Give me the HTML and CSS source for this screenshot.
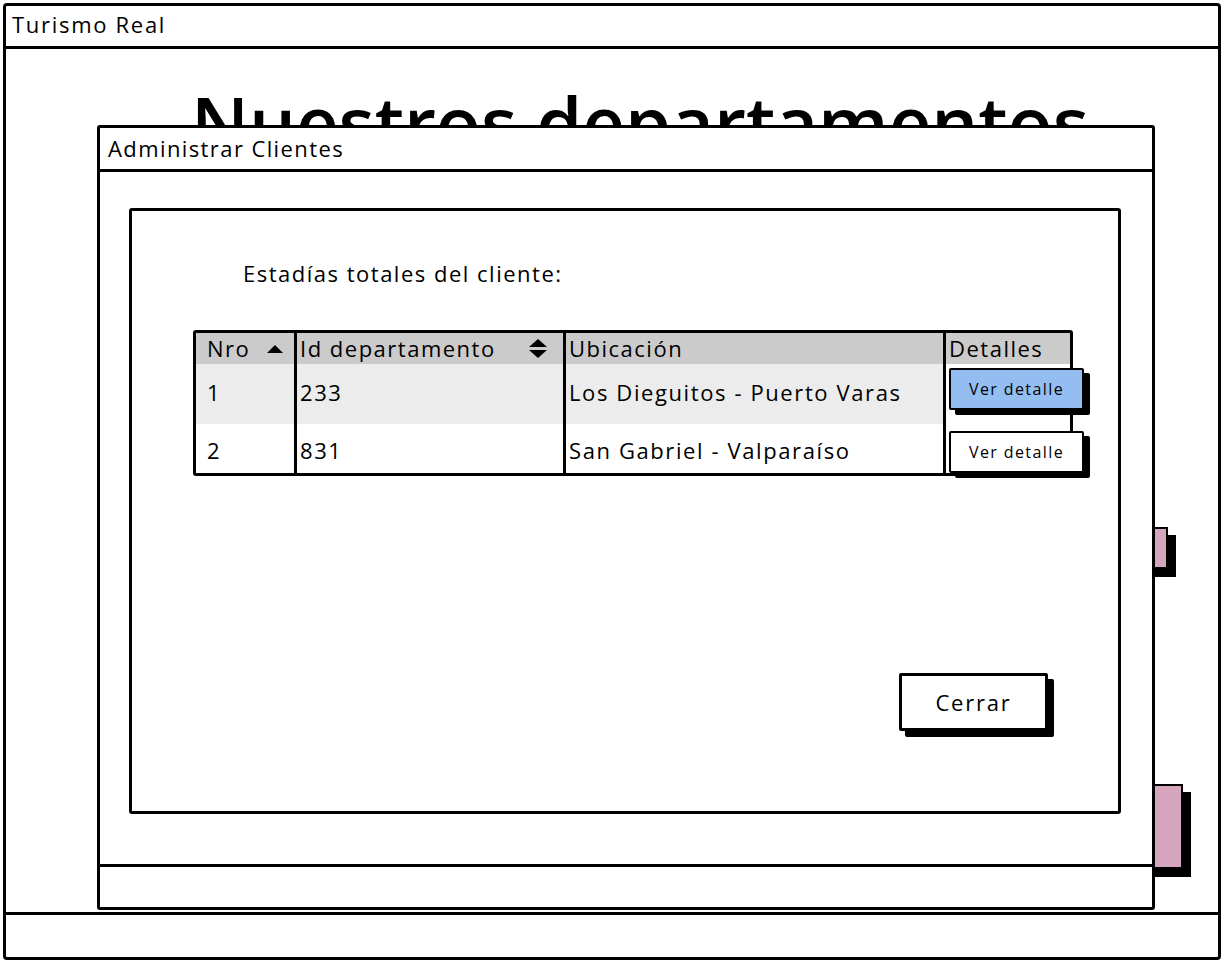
FILE: index.html
```html
<!DOCTYPE html>
<html lang="es">
<head>
<meta charset="utf-8">
<title>Turismo Real</title>
<link rel="stylesheet" href="styles.css">
</head>
<body>
<div class="window">
  <header class="win-title">Turismo Real</header>
  <main class="page">
    <h1 class="page-title">Nuestros departamentos</h1>
    <div class="side-actions">
      <span class="pink-btn pink-small"></span>
      <span class="pink-btn pink-large"></span>
    </div>

    <section class="modal">
      <div class="modal-title">Administrar Clientes</div>
      <div class="modal-body">
        <div class="panel">
          <p class="label">Estadías totales del cliente:</p>
          <table class="grid">
            <thead>
              <tr>
                <th class="c-nro"><span class="th-in">Nro <span class="tri-up"></span></span></th>
                <th class="c-id"><span class="th-in">Id departamento <span class="sort-both"><span class="tri-up"></span><span class="tri-down"></span></span></span></th>
                <th class="c-ubi">Ubicación</th>
                <th class="c-det">Detalles</th>
              </tr>
            </thead>
            <tbody>
              <tr class="row-alt">
                <td class="c-nro">1</td>
                <td class="c-id">233</td>
                <td class="c-ubi">Los Dieguitos - Puerto Varas</td>
                <td class="c-det"><button class="btn-detail btn-primary">Ver detalle</button></td>
              </tr>
              <tr class="row-plain">
                <td class="c-nro">2</td>
                <td class="c-id">831</td>
                <td class="c-ubi">San Gabriel - Valparaíso</td>
                <td class="c-det"><button class="btn-detail">Ver detalle</button></td>
              </tr>
            </tbody>
          </table>
          <div class="actions">
            <button class="btn-close">Cerrar</button>
          </div>
        </div>
      </div>
      <div class="modal-footer"></div>
    </section>
  </main>
  <footer class="win-status"></footer>
</div>
</body>
</html>
```
FILE: styles.css
```css
* { box-sizing: border-box; }

html, body {
  margin: 0;
  padding: 0;
  background: #fff;
}

body {
  font-family: "Open Sans", "DejaVu Sans", sans-serif;
  color: #000;
}

.window {
  margin: 3px;
  width: 1218px;
  height: 957px;
  border: 3px solid #000;
  border-radius: 4px;
  display: flex;
  flex-direction: column;
  overflow: hidden;
}

.win-title {
  height: 43px;
  border-bottom: 3px solid #000;
  padding-left: 6px;
  font-size: 22px;
  letter-spacing: 1.7px;
  line-height: 36px;
}

.page {
  flex: 1;
  position: relative;
}

.win-status {
  height: 45px;
  border-top: 3px solid #000;
}

.page-title {
  margin: 37px 0 0 185px;
  font-size: 74px;
  font-weight: 600;
  line-height: 1;
  white-space: nowrap;
}

.side-actions {
  display: flex;
  flex-direction: column;
  align-items: flex-end;
  padding-top: 367px;
}

.pink-btn {
  display: block;
  background: #d6a6bf;
  border: 2px solid #000;
  box-shadow: 8px 8px 0 #000;
}

.pink-small {
  width: 100px;
  height: 42px;
  margin-right: 50px;
}

.pink-large {
  width: 100px;
  height: 85px;
  margin-right: 35px;
  margin-top: 215px;
}

/* Modal */
.modal {
  position: absolute;
  left: 91px;
  top: 76px;
  width: 1058px;
  height: 785px;
  background: #fff;
  border: 3px solid #000;
  border-radius: 3px;
  display: flex;
  flex-direction: column;
}

.modal-title {
  height: 44px;
  border-bottom: 3px solid #000;
  padding-left: 8px;
  font-size: 22px;
  letter-spacing: 1.4px;
  line-height: 40px;
}

.modal-body {
  flex: 1;
  padding: 36px 31px 50px 29px;
  display: flex;
}

.modal-footer {
  height: 43px;
  border-top: 3px solid #000;
}

.panel {
  flex: 1;
  border: 3px solid #000;
  border-radius: 3px;
  display: flex;
  flex-direction: column;
  align-items: flex-start;
}

.label {
  margin: 48px 0 0 111px;
  font-size: 22px;
  letter-spacing: 1.5px;
  line-height: 28px;
}

/* Table */
.grid {
  margin: 43px 0 0 61px;
  width: 880px;
  table-layout: fixed;
  border-collapse: separate;
  border-spacing: 0;
  border: 3px solid #000;
  border-radius: 3px;
  font-size: 22px;
  letter-spacing: 1.5px;
}

.grid th,
.grid td {
  padding: 0 3px;
  text-align: left;
  font-weight: 400;
  white-space: nowrap;
  overflow: visible;
}

.grid th + th,
.grid td + td {
  border-left: 3px solid #000;
}

.grid .c-nro { width: 98px; padding-left: 11px; }
.grid .c-id { width: 269px; }
.grid .c-ubi { width: 380px; }
.grid .c-det { width: 127px; }

.grid thead th {
  background: #cbcbcb;
  height: 31px;
  line-height: 29px;
  vertical-align: middle;
}

.grid th.c-nro { padding-right: 11px; }
.grid th.c-id { padding-right: 16px; }

.th-in {
  display: flex;
  align-items: center;
  justify-content: space-between;
}

.tri-up,
.tri-down {
  display: block;
  width: 0;
  height: 0;
  border-left: 8px solid transparent;
  border-right: 8px solid transparent;
}

.tri-up { border-bottom: 8px solid #000; }
.tri-down { border-top: 8px solid #000; }

.sort-both {
  display: flex;
  flex-direction: column;
  gap: 3px;
  margin-left: 1px;
}

.sort-both .tri-up,
.sort-both .tri-down {
  border-left-width: 9px;
  border-right-width: 9px;
}

.grid tbody td {
  font-size: 22px;
  letter-spacing: 1.6px;
  vertical-align: top;
}

.row-alt td {
  background: #ececec;
  height: 60px;
  padding-top: 13px;
}

.row-plain td {
  background: #fff;
  height: 49px;
  padding-top: 11px;
}

.grid td.c-det {
  background: transparent;
  padding-top: 0;
  position: relative;
}

.row-alt td.c-det { padding-top: 4px; }
.row-plain td.c-det { padding-top: 7px; }

.btn-detail {
  display: block;
  width: 135px;
  height: 42px;
  margin-left: 0;
  border: 2px solid #000;
  border-radius: 2px;
  background: #fff;
  box-shadow: 6px 5px 0 #000;
  font-family: inherit;
  font-size: 16px;
  letter-spacing: 1.4px;
  color: #000;
  padding: 0;
}

.btn-primary {
  background: #94bdf2;
}

.actions {
  align-self: stretch;
  display: flex;
  justify-content: flex-end;
  margin-top: 197px;
  padding-right: 70px;
}

.btn-close {
  width: 149px;
  height: 58px;
  border: 3px solid #000;
  border-radius: 2px;
  background: #fff;
  box-shadow: 6px 6px 0 #000;
  font-family: inherit;
  font-size: 22px;
  letter-spacing: 1.8px;
  color: #000;
  padding: 0;
}
```
